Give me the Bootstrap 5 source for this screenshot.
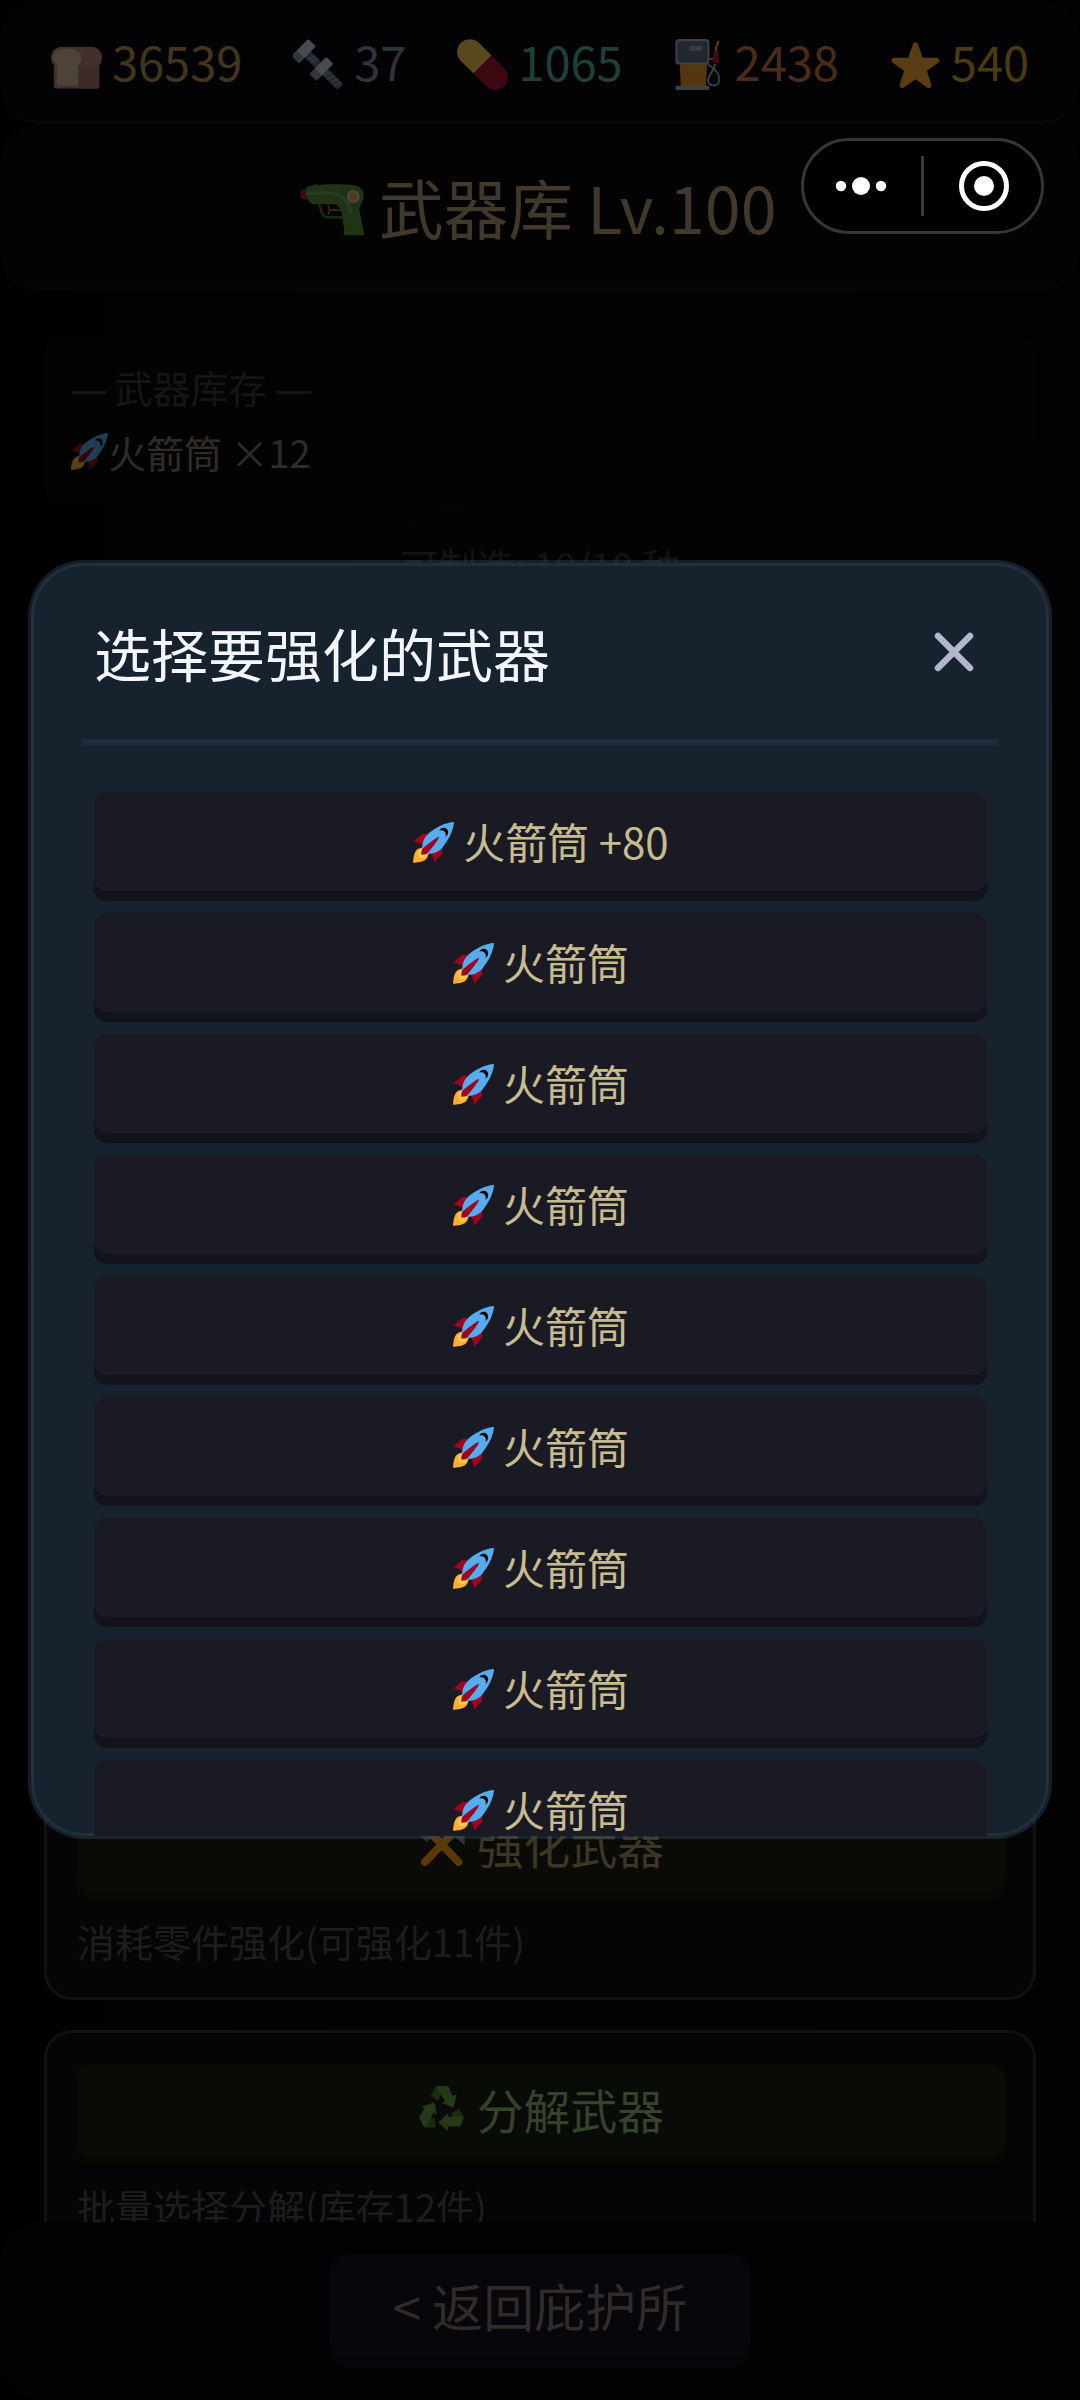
<!DOCTYPE html>
<html lang="zh-CN">
<head>
<meta charset="utf-8">
<meta name="viewport" content="width=device-width, initial-scale=1">
<title>武器库</title>
<link rel="stylesheet" href="https://cdn.jsdelivr.net/npm/bootstrap@5.3.0/dist/css/bootstrap.min.css">
<script src="https://cdn.jsdelivr.net/npm/bootstrap@5.3.0/dist/js/bootstrap.bundle.min.js"></script>
<style>
  body { margin: 0; background: #000; font-family: "Noto Sans CJK SC", sans-serif; font-weight: 400; }
  .app { width: 1080px; height: 2400px; background:
      radial-gradient(ellipse 130px 60px at 450px 525px, #050203, transparent),
      radial-gradient(ellipse 320px 200px at 1000px 590px, #050204, transparent),
      linear-gradient(90deg, #000 0, #020203 12%, #030304 50%, #020203 100%); }
  .emo { width: 1em; height: 1em; flex: none; display: block; }
  .dim .emo { opacity: .34; }
  .topbar { height: 124px; border-bottom: 3px solid #070709; border-radius: 38px; background: #030305; font-size: 47px; line-height: 1; }
  .topbar .emo { width: 51px; height: 51px; margin-top: 8px; }
  .topbar .emo.bread-ico { opacity: .31; }
  .res { gap: 10px; }
  .titlebar { height: 166px; border-bottom: 3px solid #060608; border-radius: 38px; background: #030304; color: #40382a; font-size: 64.6px; line-height: 1; gap: 14px; padding: 2px 3px 0 0; }
  .titlebar .emo { margin-top: 4px; }
  .stage { padding: 46px 44px 0; min-height: 0; }
  .stock { height: 168px; border-radius: 18px; background: #030303; padding: 23px 26px; font-size: 38px; line-height: 56px; }
  .stock-title { color: #15151a; margin-bottom: 8px; }
  .dash { font-family: "Noto Sans", sans-serif; letter-spacing: -2px; }
  .stock-row { color: #302c25; }
  .craft-count { margin-top: 32px; font-size: 38px; line-height: 57px; color: #121316; }
  .craft-area { height: 1172px; }
  .action { height: 235px; flex: none; border: 3px solid #14100d; border-radius: 28px; background: #050507; padding: 31px 28px 0 30px; margin-bottom: 30px; }
  .action-btn { height: 102px; border-radius: 14px; font-size: 46.8px; line-height: 1; gap: 12px; padding-bottom: 11px; }
  .btn-forge { background: #0a0a06; box-shadow: inset 0 -10px #070703; color: #3c3627; }
  .btn-split { background: #080b06; box-shadow: inset 0 -10px #050703; color: #35422c; }
  .action-note { font-size: 38px; line-height: 56px; color: #1f1d1b; margin-top: 12px; white-space: nowrap; }
  .footbar { height: 178px; border-radius: 38px; background: #020204; }
  .back-btn { width: 422px; height: 114px; border-radius: 20px; background: #07060b; box-shadow: inset 0 -10px #060609; color: #302a28; font-size: 51px; line-height: 1; padding-bottom: 11px; }
  .capsule { left: 801px; top: 138px; width: 243px; height: 96px; border: 3px solid #363637; border-radius: 48px; background: #000; }
  .picker { left: 28px; top: 560px; width: 1024px; height: 1279px; border: 3px solid rgba(62, 84, 102, .34); border-radius: 56px; background: #16232f; background-clip: padding-box; box-shadow: inset 0 0 0 3px #1f2f3d; padding: 0 51px; }
  .picker-head { height: 182px; flex: none; border-bottom: 6px solid #1f2d3b; padding: 2px 24px 0 12px; color: #f4f6fe; font-size: 57px; line-height: 1; }
  .picker-list { padding: 47px 11px 0 12px; }
  .weapon { height: 109px; margin-bottom: 12px; flex: none; border-radius: 13px; background: #1a1a24; box-shadow: inset 0 -10px #13131b; color: #c6bc8f; font-size: 42px; line-height: 1; gap: 9px; padding-bottom: 9px; }
  .weapon span { margin-top: -3px; }
  .weapon .emo { margin-top: 1px; }
</style>
</head>
<body>
<svg width="0" height="0" class="position-absolute">
  <symbol id="rocket" viewBox="0 0 36 36">
    <path fill="#A0041E" d="M1 17l8-7 16 1 1 16-7 8s.001-5.999-6-12-12-6-12-6z"/>
    <path fill="#FFAC33" d="M.973 35s-.036-7.979 2.985-11S15 21.187 15 21.187 14.999 29 11.999 32c-3 3-11.026 3-11.026 3z"/>
    <circle fill="#FFCC4D" cx="9" cy="27" r="4"/>
    <path fill="#55ACEE" d="M36 0s-10 0-22 10c-6 5-6 14-4 16s11 2 16-4C36 10 36 0 36 0z"/>
    <path d="M27 5c-1.623 0-3.013.971-3.641 2.36C23.861 7.133 24.414 7 25 7c2.209 0 4 1.791 4 4 0 .586-.133 1.139-.359 1.64C30.03 12.013 31 10.623 31 9c0-2.209-1.791-4-4-4z"/>
    <path fill="#A0041E" d="M8 28s0-4 1-5 13.001-10.999 14-10-9.001 13-10.001 14S8 28 8 28z"/>
  </symbol>
  <symbol id="bread" viewBox="0 0 36 36">
    <path fill="#CE9280" d="M8 5.400h20.500C33 5.400 36 9 36 13c0 2.800-1 4.500-2 5.500V33a2 2 0 0 1-2 2H4a2 2 0 0 1-2-2V18.500C1 17.500 0 15.800 0 13 0 9 3 5.400 8 5.400z"/>
    <path fill="#C08271" d="M19.500 19.500H34V33a2 2 0 0 1-2 2H18z"/>
    <path fill="#F2D6A6" d="M11 6.800c6 0 10.400 2 10.400 6.600 0 2.600-1 4.200-2.200 5.200V31a2 2 0 0 1-2 2H6.300a2 2 0 0 1-2-2V18C3 17 1.500 15.500 1.500 13c0-4 4.500-6.200 9.500-6.200z"/>
  </symbol>
  <symbol id="bolt" viewBox="0 0 36 36">
    <g transform="translate(8 8.400) rotate(45)">
      <rect fill="#5F7683" x="0" y="-2.900" width="36" height="5.800" rx="1.400"/>
      <path stroke="#8899A6" stroke-width="1.200" d="M6 2.900l2-5.800M9 2.900l2-5.800M22 2.900l2-5.800M25.500 2.900l2-5.800M29 2.900l2-5.800M32 2.900l2-5.800"/>
      <rect fill="#CCD6DD" x="-4" y="-8" width="7.500" height="16" rx="1.200"/><path fill="#8899A6" d="M-4 3.500h7.500V8a1 1 0 0 1-1 1H-3a1 1 0 0 1-1-1z"/>
      <rect fill="#CCD6DD" x="14" y="-8" width="7" height="16" rx="1.200"/><path fill="#8899A6" d="M14 3.500h7V8a1 1 0 0 1-1 1H15a1 1 0 0 1-1-1z"/>
    </g>
  </symbol>
  <symbol id="pill" viewBox="0 0 36 36">
    <g transform="translate(18 18) rotate(45)">
      <path fill="#FFCC4D" d="M0-9h-12.600a9 9 0 0 0 0 18H0z"/><path fill="#A8102A" d="M0-9h12.600a9 9 0 0 1 0 18H0z"/>
    </g>
  </symbol>
  <symbol id="pump" viewBox="0 0 36 36">
    <path fill="#F09A25" d="M4 16h19.500l-1 18H4.800z"/>
    <rect fill="#AAB8C2" x="1" y="0" width="24" height="18" rx="2.500"/><rect fill="#5C6E79" x="2.400" y="1.500" width="21.200" height="15" rx="2"/>
    <rect fill="#99AAB5" x="10.800" y="4.700" width="9.200" height="3.600" rx=".6"/>
    <rect fill="#AAB8C2" x="1" y="33" width="24" height="3" rx=".8"/>
    <path fill="none" stroke="#AAB8C2" stroke-width="1.300" d="M24 14h6M24 18c5 3 8.500 7 7.800 11.500-.6 4.400-7.300 4.300-7.700 0C24 25 28.500 23 29 17.500"/>
    <path fill="#BE1931" d="M28.700 8h2.400l.8 8.700h-4.700l.4-4z"/><path stroke="#FFAC33" stroke-width="1.400" fill="none" stroke-linecap="round" d="M29.500 8c0-3 .8-3.500 1.800-6.300"/>
  </symbol>
  <symbol id="star" viewBox="0 0 36 36">
    <path fill="#FFAC33" d="M27.287 34.627c-.404 0-.806-.124-1.152-.371L18 28.422l-8.135 5.834c-.343.247-.743.371-1.143.371-.412 0-.823-.133-1.170-.389-.679-.499-.963-1.379-.704-2.180l3.141-9.602-8.061-5.680c-.685-.495-.971-1.373-.710-2.176.259-.803 1.005-1.349 1.848-1.354l9.949-.015 3.130-9.566c.265-.800 1.013-1.340 1.855-1.340.840 0 1.587.540 1.855 1.340l3.067 9.566 10.013.015c.844.005 1.592.551 1.849 1.354.262.803-.026 1.681-.710 2.176l-8.062 5.680 3.143 9.602c.259.801-.025 1.681-.704 2.180-.347.256-.758.389-1.169.389z"/>
  </symbol>
  <symbol id="watergun" viewBox="0 0 36 36">
    <rect fill="#BE1931" x=".4" y="7.600" width="5" height="5.200" rx="1.500"/>
    <path fill="none" stroke="#3E721D" stroke-width="1.500" d="M10.500 15l2 6.200q.8 1.900 3 1.900h9"/>
    <path fill="none" stroke="#C1694F" stroke-width=".9" d="M15.500 16.500c1.300 2 1.300 3 0 5M16.500 19h6"/>
    <path fill="#3E721D" d="M7 5.500q1.500-2 4 0zM34 8h1q1.200 2.500 0 5.500h-1z"/>
    <path fill="#5C913B" d="M5 5.700C12 4.200 25 4.500 30 5.200c4.500.7 6.300 4 5 8.300-.5 1.800-1.700 3-2 5L35.800 32c0 .7-.5 1-1 1H25.500c-1.200 0-1.500-1-.8-2.200l-1.200-9c-1-4-2.500-6-5-6H8c-3-.5-5-4-4.700-7.300.1-1.700.5-2.500 1.700-2.800z"/>
    <path fill="none" stroke="#77A857" stroke-width="1.500" stroke-linecap="round" d="M4.500 9.800c8-.5 14-1 18 1.200 3.500 2 5 5 5.700 9.200"/>
    <circle fill="#CCD6DD" cx="29.700" cy="11.400" r="3.500"/><circle fill="#F4A020" cx="29.700" cy="11.400" r="2.400"/>
  </symbol>
  <symbol id="hammers" viewBox="0 0 36 36">
    <path fill="#66899F" d="M0 10L9 1l8 6-10 9zM36 9.500V19l-9-8.500L19 7l8-6z"/>
    <path stroke="#F4900C" stroke-width="6" stroke-linecap="round" d="M5.300 31.500L31 5M31.200 31.500L5.500 5"/>
  </symbol>
  <symbol id="recycle" viewBox="0 0 36 36">
    <path fill="#3E721D" d="M9.800 7.500L13.900.5 18 6l-2.700 5.500zM25.600 21l6-3.500 2.700 5L29 26zM8.500 25h4.800v7H5.500z"/>
    <path fill="#5C913B" d="M13.900 0h9.300l3.400 7.300 3-.5-2.200 10-9-3.600 2.400-1.500zM35.700 23.300l-3.200 7.900h-9.300v3.600L15.500 28l7.700-7v2.500zM.8 24L5 17.300l-2.500-1.100L12.500 12.500l2.200 9.500-2.700-1.600L6 31.500H4.500z"/>
  </symbol>
</svg>

<div class="app position-relative overflow-hidden d-flex flex-column">
  <header class="topbar dim flex-shrink-0 d-flex justify-content-evenly align-items-center">
    <div class="res d-flex align-items-center" style="color:#43351d"><svg class="emo bread-ico"><use href="#bread"/></svg><span>36539</span></div>
    <div class="res d-flex align-items-center" style="color:#2c343d"><svg class="emo"><use href="#bolt"/></svg><span>37</span></div>
    <div class="res d-flex align-items-center" style="color:#1f4036"><svg class="emo"><use href="#pill"/></svg><span>1065</span></div>
    <div class="res d-flex align-items-center" style="color:#482c19"><svg class="emo"><use href="#pump"/></svg><span>2438</span></div>
    <div class="res d-flex align-items-center" style="color:#4b3a14"><svg class="emo"><use href="#star"/></svg><span>540</span></div>
  </header>
  <div class="titlebar dim flex-shrink-0 d-flex justify-content-center align-items-center">
    <svg class="emo"><use href="#watergun"/></svg><span>武器库 Lv.100</span>
  </div>
  <main class="stage flex-fill overflow-hidden d-flex flex-column">
    <section class="stock flex-shrink-0">
      <div class="stock-title"><span class="dash">—</span> 武器库存 <span class="dash">—</span></div>
      <div class="stock-row dim d-flex align-items-center"><svg class="emo"><use href="#rocket"/></svg><span>火箭筒 ×12</span></div>
    </section>
    <div class="craft-count text-center flex-shrink-0">可制造: 10/10 种</div>
    <div class="craft-area flex-shrink-0"></div>
    <section class="action">
      <div class="action-btn btn-forge dim d-flex justify-content-center align-items-center"><svg class="emo"><use href="#hammers"/></svg><span>强化武器</span></div>
      <div class="action-note">消耗零件强化(可强化11件)</div>
    </section>
    <section class="action">
      <div class="action-btn btn-split dim d-flex justify-content-center align-items-center"><svg class="emo"><use href="#recycle"/></svg><span>分解武器</span></div>
      <div class="action-note">批量选择分解(库存12件)</div>
    </section>
  </main>
  <footer class="footbar flex-shrink-0 d-flex justify-content-center align-items-center">
    <div class="back-btn d-flex justify-content-center align-items-center">&lt; 返回庇护所</div>
  </footer>

  <div class="picker position-absolute overflow-hidden d-flex flex-column">
    <div class="picker-head d-flex justify-content-between align-items-center">
      <span>选择要强化的武器</span>
      <svg width="40" height="40" viewBox="0 0 40 40"><path stroke="#b2b7ca" stroke-width="6.500" stroke-linecap="round" d="M4 4l32 32M36 4L4 36"/></svg>
    </div>
    <div class="picker-list d-flex flex-column">
      <div class="weapon d-flex justify-content-center align-items-center"><svg class="emo"><use href="#rocket"/></svg><span>火箭筒 +80</span></div>
      <div class="weapon d-flex justify-content-center align-items-center"><svg class="emo"><use href="#rocket"/></svg><span>火箭筒</span></div>
      <div class="weapon d-flex justify-content-center align-items-center"><svg class="emo"><use href="#rocket"/></svg><span>火箭筒</span></div>
      <div class="weapon d-flex justify-content-center align-items-center"><svg class="emo"><use href="#rocket"/></svg><span>火箭筒</span></div>
      <div class="weapon d-flex justify-content-center align-items-center"><svg class="emo"><use href="#rocket"/></svg><span>火箭筒</span></div>
      <div class="weapon d-flex justify-content-center align-items-center"><svg class="emo"><use href="#rocket"/></svg><span>火箭筒</span></div>
      <div class="weapon d-flex justify-content-center align-items-center"><svg class="emo"><use href="#rocket"/></svg><span>火箭筒</span></div>
      <div class="weapon d-flex justify-content-center align-items-center"><svg class="emo"><use href="#rocket"/></svg><span>火箭筒</span></div>
      <div class="weapon d-flex justify-content-center align-items-center"><svg class="emo"><use href="#rocket"/></svg><span>火箭筒</span></div>
    </div>
  </div>

  <div class="capsule position-absolute">
    <svg class="d-block" width="237" height="90" viewBox="0 0 237 90">
      <g fill="#fff"><circle cx="37" cy="45" r="5.200"/><circle cx="57" cy="45" r="9"/><circle cx="77" cy="45" r="5.200"/><circle cx="180" cy="45" r="10"/></g>
      <rect x="117" y="15" width="3" height="60" fill="#3a3a3c"/>
      <circle cx="180" cy="45" r="22.500" fill="none" stroke="#fff" stroke-width="5"/>
    </svg>
  </div>
</div>
</body>
</html>
